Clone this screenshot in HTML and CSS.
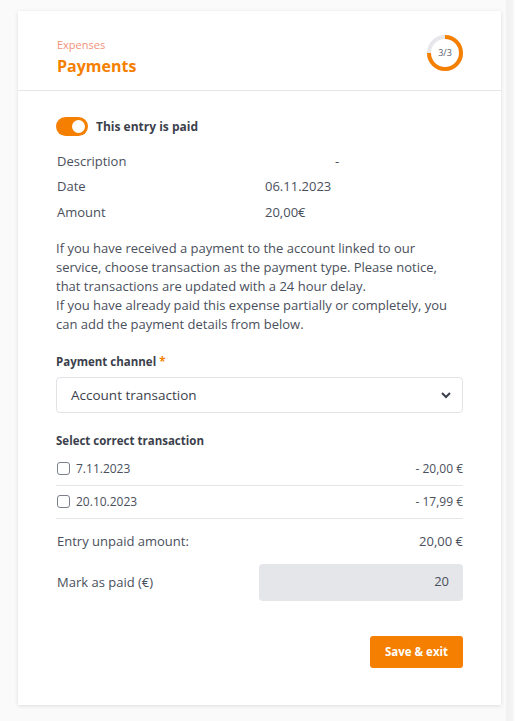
FILE: index.html
```html
<!DOCTYPE html>
<html lang="en">
<head>
<meta charset="utf-8">
<title>Payments</title>
<link rel="stylesheet" href="styles.css">
</head>
<body>
<div class="page">
  <div class="card">
    <header class="card-head">
      <div class="titles">
        <div class="crumb">Expenses</div>
        <h1 class="title">Payments</h1>
      </div>
      <div class="progress">
        <svg width="38" height="38" viewBox="0 0 38 38">
          <circle cx="19" cy="19" r="16" fill="none" stroke="#e6e7ea" stroke-width="4"/>
          <path d="M19 3 A16 16 0 1 1 3 19" fill="none" stroke="#f57f00" stroke-width="4"/>
        </svg>
        <span class="progress-text">3/3</span>
      </div>
    </header>
    <div class="card-body">
      <label class="toggle-row">
        <span class="toggle"><span class="knob"></span></span>
        <span class="toggle-label">This entry is paid</span>
      </label>
      <div class="info">
        <div class="info-row"><span class="info-label">Description</span><span class="info-value dash">-</span></div>
        <div class="info-row"><span class="info-label">Date</span><span class="info-value">06.11.2023</span></div>
        <div class="info-row"><span class="info-label">Amount</span><span class="info-value">20,00€</span></div>
      </div>
      <p class="note">If you have received a payment to the account linked to our service, choose transaction as the payment type. Please notice, that transactions are updated with a 24 hour delay.<br>If you have already paid this expense partially or completely, you can add the payment details from below.</p>
      <div class="field">
        <div class="field-label">Payment channel <span class="req">*</span></div>
        <div class="select">
          <span>Account transaction</span>
          <svg width="12" height="8" viewBox="0 0 12 8"><path d="M2 2 L6 6 L10 2" fill="none" stroke="#3b3f4c" stroke-width="2"/></svg>
        </div>
      </div>
      <div class="field-label tx-title">Select correct transaction</div>
      <div class="tx-list">
        <div class="tx-row"><span class="check"></span><span class="tx-date">7.11.2023</span><span class="tx-amount">- 20,00 €</span></div>
        <div class="tx-row"><span class="check"></span><span class="tx-date">20.10.2023</span><span class="tx-amount">- 17,99 €</span></div>
      </div>
      <div class="sum-row"><span>Entry unpaid amount:</span><span>20,00 €</span></div>
      <div class="paid-row">
        <span>Mark as paid (€)</span>
        <div class="paid-input">20</div>
      </div>
      <div class="actions">
        <button class="btn">Save &amp; exit</button>
      </div>
    </div>
  </div>
  <div class="edge"></div>
</div>
</body>
</html>
```
FILE: styles.css
```css
* { box-sizing: border-box; }
html, body { margin: 0; padding: 0; }
body {
  background: #fafafa;
  font-family: "Open Sans", "Liberation Sans", sans-serif;
  color: #4a4f5c;
  width: 515px;
  height: 721px;
  overflow: hidden;
}
.page {
  display: flex;
  align-items: flex-start;
  padding: 11px 0 0 18px;
}
.card {
  width: 483px;
  height: 694px;
  background: #fff;
  box-shadow: 0 1px 4px rgba(0,0,0,0.12);
}
.edge {
  margin-left: 5px;
  width: 7px;
  height: 721px;
  margin-top: -11px;
  background: linear-gradient(90deg, #f1f1f1, #f4f4f4);
}
.card-head {
  height: 80px;
  border-bottom: 1px solid #e5e6ea;
  display: flex;
  justify-content: space-between;
  align-items: center;
  padding: 12px 37px 0 39px;
}
.crumb {
  font-size: 11px;
  color: #f2917a;
  line-height: 14px;
}
.title {
  margin: 4px 0 0;
  font-size: 16px;
  font-weight: 700;
  color: #f57f00;
  line-height: 20px;
}
.progress {
  position: relative;
  width: 38px;
  height: 38px;
  margin-top: -8px;
}
.progress svg { display: block; }
.progress-text {
  position: absolute;
  inset: 0;
  display: flex;
  align-items: center;
  justify-content: center;
  font-size: 9px;
  color: #5a6070;
}
.card-body {
  padding: 26px 38px 0 38px;
}
.toggle-row {
  display: flex;
  align-items: center;
  gap: 8px;
}
.toggle {
  width: 32px;
  height: 19px;
  border-radius: 10px;
  background: #f57f00;
  display: flex;
  align-items: center;
  justify-content: flex-end;
  padding-right: 3px;
}
.knob {
  width: 13px;
  height: 13px;
  border-radius: 50%;
  background: #fff;
}
.toggle-label {
  font-size: 12px;
  font-weight: 700;
  color: #3b3f4c;
}
.info { margin-top: 12px; padding-left: 1px; }
.info-row {
  display: flex;
  height: 25.5px;
  align-items: center;
  font-size: 13px;
}
.info-label { width: 208px; }
.dash { margin-left: 70px; }
.note {
  margin: 14px 0 0;
  font-size: 13px;
  line-height: 19px;
  color: #4a4f5c;
}
.field { margin-top: 20px; }
.field-label {
  font-size: 11.5px;
  font-weight: 700;
  color: #3b3f4c;
  line-height: 16px;
}
.req { color: #f57f00; }
.select {
  margin-top: 7px;
  height: 36px;
  border: 1px solid #e2e3e7;
  border-radius: 4px;
  display: flex;
  justify-content: space-between;
  align-items: center;
  padding: 0 10px 0 14px;
  font-size: 13.5px;
  color: #3b3f4c;
}
.tx-title { margin-top: 20px; }
.tx-list { margin-top: 4px; }
.tx-row {
  display: flex;
  align-items: center;
  height: 33px;
  border-bottom: 1px solid #e5e6ea;
  font-size: 12px;
}
.check {
  width: 13px;
  height: 13px;
  border: 1px solid #7a7f8a;
  border-radius: 3px;
  margin: 0 6px 0 1px;
}
.tx-amount { margin-left: auto; }
.sum-row {
  display: flex;
  justify-content: space-between;
  height: 45px;
  align-items: center;
  font-size: 13px;
  padding-left: 1px;
}
.paid-row {
  display: flex;
  justify-content: space-between;
  align-items: center;
  font-size: 13px;
  padding-left: 1px;
}
.paid-input {
  width: 204px;
  height: 37px;
  background: #e5e6e9;
  border-radius: 4px;
  text-align: right;
  padding: 8px 14px 0 0;
  font-size: 13px;
}
.actions {
  display: flex;
  justify-content: flex-end;
  margin-top: 35px;
}
.btn {
  width: 93px;
  height: 32px;
  background: #f57f00;
  border: none;
  border-radius: 3px;
  color: #fff;
  font-family: inherit;
  font-size: 11.5px;
  font-weight: 700;
}
```
